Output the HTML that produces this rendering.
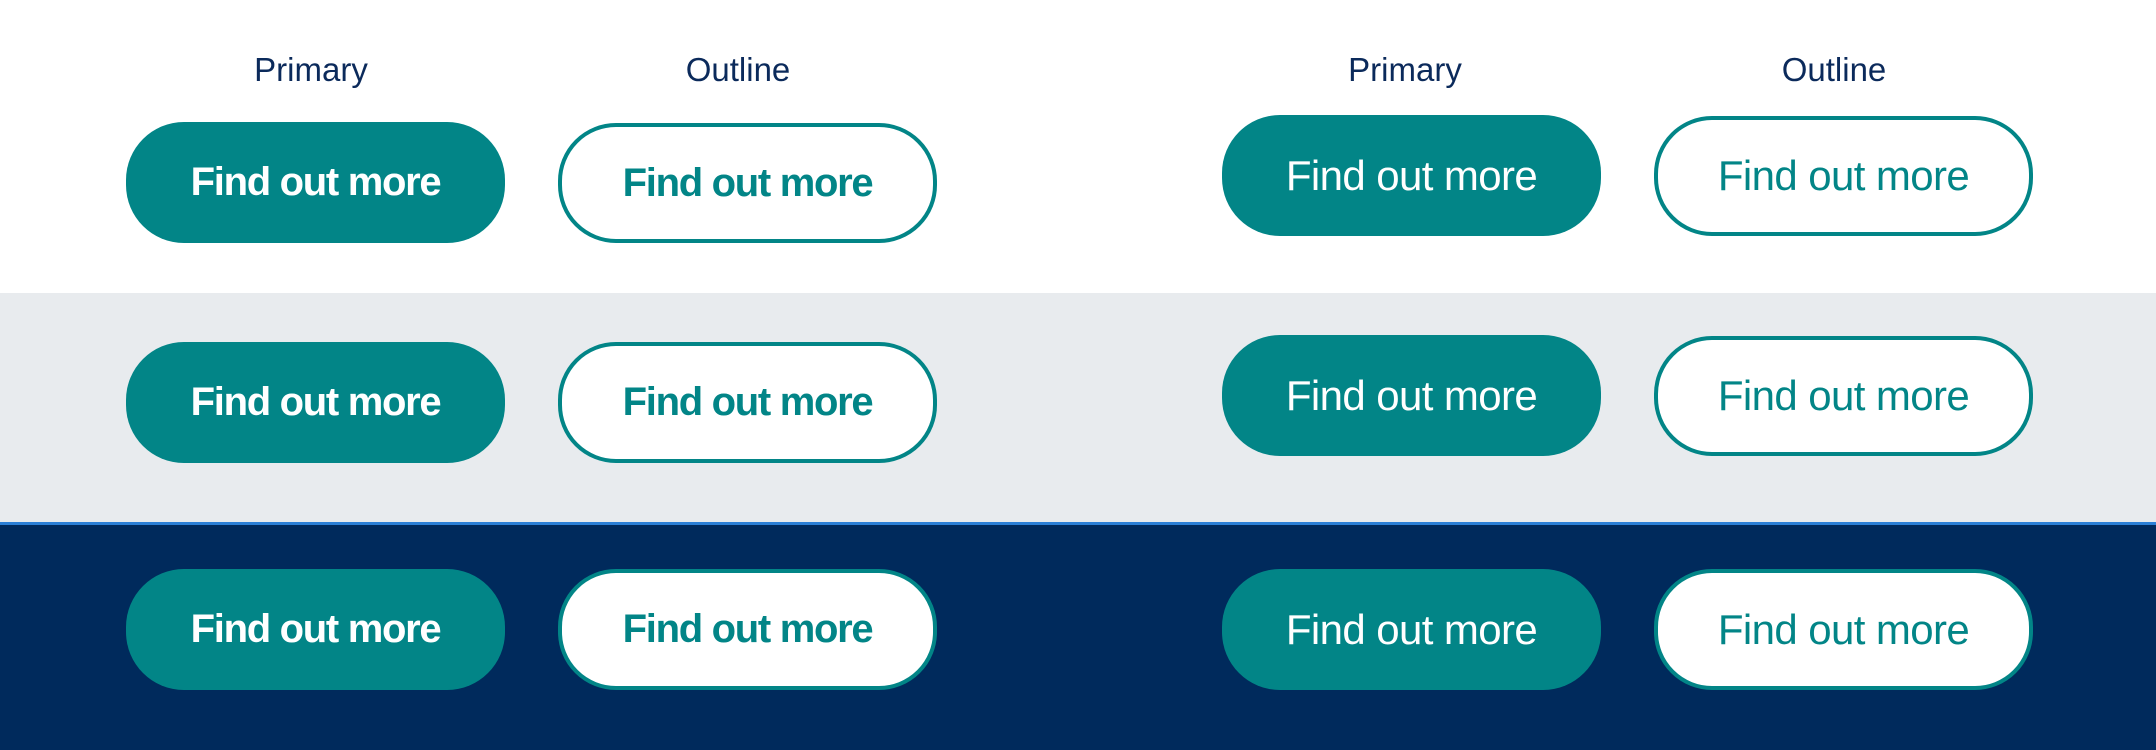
<!DOCTYPE html>
<html><head><style>
*{margin:0;padding:0;box-sizing:border-box}
body{width:2156px;height:750px;position:relative;overflow:hidden;background:#fff;font-family:"Liberation Sans",sans-serif}
.band{position:absolute;left:0;width:2156px}
.lbl{position:absolute;color:#0b2a5b;font-size:33px;transform:translateX(-50%);white-space:nowrap;top:51px}
.b{position:absolute;width:379px;height:121px;border-radius:58px;display:flex;align-items:center;justify-content:center;white-space:nowrap}
.p{background:#028587;color:#fff}
.o{background:#fff;color:#028587;border:4px solid #028587}
.l{font-weight:bold;font-size:40px;letter-spacing:-1.3px}
.r{font-size:42px;letter-spacing:-0.6px}
</style></head><body>
<div class="band" style="top:293px;height:230px;background:#e8ebee"></div>
<div class="band" style="top:522px;height:3px;background:#2b7fd6"></div>
<div class="band" style="top:525px;height:225px;background:#002a5c"></div>

<div class="lbl" style="left:311px">Primary</div>
<div class="lbl" style="left:738px">Outline</div>
<div class="lbl" style="left:1405px">Primary</div>
<div class="lbl" style="left:1834px">Outline</div>

<div class="b p l" style="left:126px;top:122px">Find out more</div>
<div class="b o l" style="left:558px;top:123px;height:120px">Find out more</div>
<div class="b p l" style="left:126px;top:342px">Find out more</div>
<div class="b o l" style="left:558px;top:342px">Find out more</div>
<div class="b p l" style="left:126px;top:569px">Find out more</div>
<div class="b o l" style="left:558px;top:569px">Find out more</div>

<div class="b p r" style="left:1222px;top:115px">Find out more</div>
<div class="b o r" style="left:1654px;top:116px;height:120px">Find out more</div>
<div class="b p r" style="left:1222px;top:335px">Find out more</div>
<div class="b o r" style="left:1654px;top:336px;height:120px">Find out more</div>
<div class="b p r" style="left:1222px;top:569px">Find out more</div>
<div class="b o r" style="left:1654px;top:569px">Find out more</div>
</body></html>
